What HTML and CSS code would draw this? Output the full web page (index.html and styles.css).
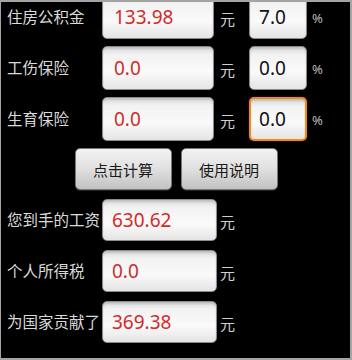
FILE: index.html
```html
<!DOCTYPE html>
<html lang="zh">
<head>
<meta charset="utf-8">
<title>工资计算器</title>
<link rel="stylesheet" href="styles.css">
</head>
<body>
<div class="frame">
  <div class="content">
    <div class="rates">
      <div class="row">
        <span class="label">住房公积金</span>
        <div class="field amount red">133.98</div>
        <span class="unit">元</span>
        <div class="field rate">7.0</div>
        <span class="pct">%</span>
      </div>
      <div class="row">
        <span class="label">工伤保险</span>
        <div class="field amount red">0.0</div>
        <span class="unit">元</span>
        <div class="field rate">0.0</div>
        <span class="pct">%</span>
      </div>
      <div class="row">
        <span class="label">生育保险</span>
        <div class="field amount red">0.0</div>
        <span class="unit">元</span>
        <div class="field rate focused">0.0</div>
        <span class="pct">%</span>
      </div>
      <div class="buttons">
        <div class="btn">点击计算</div>
        <div class="btn">使用说明</div>
      </div>
    </div>
    <div class="results">
      <div class="row res">
        <span class="label">您到手的工资</span>
        <div class="field result red">630.62</div>
        <span class="unit">元</span>
      </div>
      <div class="row res">
        <span class="label">个人所得税</span>
        <div class="field result red">0.0</div>
        <span class="unit">元</span>
      </div>
      <div class="row res">
        <span class="label">为国家贡献了</span>
        <div class="field result red">369.38</div>
        <span class="unit">元</span>
      </div>
    </div>
  </div>
</div>
</body>
</html>
```
FILE: styles.css
```css
* { box-sizing: border-box; }
html, body {
  margin: 0;
  padding: 0;
  background: #000;
}
.frame {
  width: 352px;
  height: 360px;
  background: #000;
  border-style: solid;
  border-color: #a4a4a4;
  border-width: 2px 2px 2px 1px;
  overflow: hidden;
  font-family: "Noto Sans CJK SC", "Noto Sans", sans-serif;
}
.content {
  margin-top: -7px;
  display: flex;
  flex-direction: column;
}
.rates {
  display: flex;
  flex-direction: column;
  gap: 7px;
}
.results {
  margin-top: 9px;
  display: flex;
  flex-direction: column;
  gap: 9px;
}
.row {
  display: flex;
  align-items: center;
  height: 44px;
  padding-left: 6px;
}
.row.res { height: 42px; }
.label {
  width: 95px;
  flex: none;
  color: #dadada;
  font-size: 15.5px;
  white-space: nowrap;
  line-height: 1;
}
.field {
  height: 100%;
  display: flex;
  align-items: center;
  border: 1px solid #8c8c8c;
  border-radius: 5px;
  background: linear-gradient(#d8d8d8 0%, #f2f2f2 18%, #fafafa 60%, #e4e4e4 100%);
  box-shadow: inset 0 2px 2px rgba(0,0,0,0.12);
  font-family: "Noto Sans", "Open Sans", sans-serif;
  font-size: 19px;
  color: #111;
  padding-left: 10px;
}
.field.red { color: #d42a2a; }
.amount { width: 112px; padding-left: 11px; }
.result { width: 115px; padding-left: 9px; }
.rate { width: 58px; margin-left: 14px; padding-left: 9px; }
.rate.focused {
  border: 2px solid #ef8a1a;
  padding-left: 8px;
  box-shadow: inset 0 2px 2px rgba(0,0,0,0.12), 0 0 1px #c96a00;
}
.unit {
  color: #d0d0d0;
  font-size: 15px;
  margin-left: 6px;
  line-height: 1;
  padding-top: 3px;
}
.res .unit { margin-left: 3px; }
.pct {
  color: #bdbdbd;
  font-size: 13px;
  margin-left: 5px;
  padding-top: 2px;
  font-family: "Noto Sans", sans-serif;
}
.buttons {
  display: flex;
  justify-content: center;
  gap: 9px;
  height: 42px;
  padding-left: 1px;
}
.btn {
  width: 97px;
  height: 42px;
  display: flex;
  align-items: center;
  justify-content: center;
  border: 1px solid #777;
  border-radius: 5px;
  background: linear-gradient(#f2f2f2 0%, #e2e2e2 45%, #c2c2c2 100%);
  box-shadow: 0 1px 1px rgba(255,255,255,0.15);
  color: #1a1a1a;
  font-size: 15px;
  padding-top: 1px;
}
```
